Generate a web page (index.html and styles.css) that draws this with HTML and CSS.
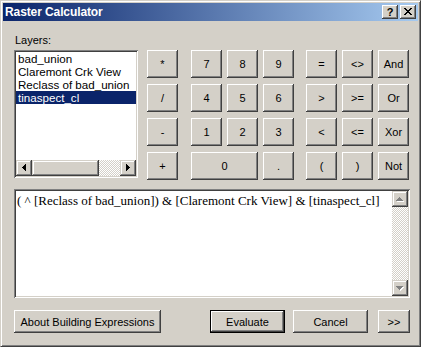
FILE: index.html
```html
<!DOCTYPE html>
<html lang="en">
<head>
    <meta charset="UTF-8" />
    <meta name="viewport" content="width=device-width, initial-scale=1.0" />
    <link rel="stylesheet" href="styles.css">
</head>
<body>
    <div class="window">
        <header class="titlebar">
            <span class="title">Raster Calculator</span>
            <div class="caption-buttons">
                <span class="cap-btn help">?</span>
                <span class="cap-btn">
                    <svg width="16" height="14" viewBox="0 0 16 14" shape-rendering="crispEdges">
                        <path d="M4 3h2v1h-2z M10 3h2v1h-2z M5 4h2v1h-2z M9 4h2v1h-2z M6 5h4v1h-4z M7 6h2v1h-2z M6 7h4v1h-4z M5 8h2v1h-2z M9 8h2v1h-2z M4 9h2v1h-2z M10 9h2v1h-2z" fill="#000"/>
                    </svg>
                </span>
            </div>
        </header>
        <main class="content">
            <section class="top">
                <div class="layers">
                    <label>Layers:</label>
                    <div class="listbox">
                        <ul class="items">
                            <li>bad_union</li>
                            <li>Claremont Crk View</li>
                            <li>Reclass of bad_union</li>
                            <li class="selected">tinaspect_cl</li>
                        </ul>
                        <div class="hscroll">
                            <span class="sb-btn">
                                <svg width="16" height="16" viewBox="0 0 16 16" shape-rendering="crispEdges">
                                    <path d="M6 7h1v1h-1z M7 6h1v3h-1z M8 5h1v5h-1z M9 4h1v7h-1z" fill="#000"/>
                                </svg>
                            </span>
                            <span class="sb-thumb"></span>
                            <span class="sb-track"></span>
                            <span class="sb-btn">
                                <svg width="16" height="16" viewBox="0 0 16 16" shape-rendering="crispEdges">
                                    <path d="M6 4h1v7h-1z M7 5h1v5h-1z M8 6h1v3h-1z M9 7h1v1h-1z" fill="#000"/>
                                </svg>
                            </span>
                        </div>
                    </div>
                </div>
                <div class="keypad">
                    <div class="ops">
                        <button class="btn">*</button>
                        <button class="btn">/</button>
                        <button class="btn">-</button>
                        <button class="btn">+</button>
                    </div>
                    <div class="digits">
                        <button class="btn">7</button>
                        <button class="btn">8</button>
                        <button class="btn">9</button>
                        <button class="btn">4</button>
                        <button class="btn">5</button>
                        <button class="btn">6</button>
                        <button class="btn">1</button>
                        <button class="btn">2</button>
                        <button class="btn">3</button>
                        <button class="btn zero">0</button>
                        <button class="btn">.</button>
                    </div>
                    <div class="logic">
                        <button class="btn">=</button>
                        <button class="btn">&lt;&gt;</button>
                        <button class="btn">And</button>
                        <button class="btn">&gt;</button>
                        <button class="btn">&gt;=</button>
                        <button class="btn">Or</button>
                        <button class="btn">&lt;</button>
                        <button class="btn">&lt;=</button>
                        <button class="btn">Xor</button>
                        <button class="btn">(</button>
                        <button class="btn">)</button>
                        <button class="btn">Not</button>
                    </div>
                </div>
            </section>
            <section class="expression">
                <div class="expr-text">( ^ [Reclass of bad_union]) &amp; [Claremont Crk View] &amp; [tinaspect_cl]</div>
                <div class="vscroll">
                    <span class="sb-btn">
                        <svg width="16" height="16" viewBox="0 0 16 16" shape-rendering="crispEdges">
                            <path d="M8 7h1v1h-1z M7 8h3v1h-3z M6 9h5v1h-5z M5 10h7v1h-7z" fill="#fff"/>
                            <path d="M7 6h1v1h-1z M6 7h3v1h-3z M5 8h5v1h-5z M4 9h7v1h-7z" fill="#808080"/>
                        </svg>
                    </span>
                    <span class="sb-track"></span>
                    <span class="sb-btn">
                        <svg width="16" height="16" viewBox="0 0 16 16" shape-rendering="crispEdges">
                            <path d="M5 7h7v1h-7z M6 8h5v1h-5z M7 9h3v1h-3z M8 10h1v1h-1z" fill="#fff"/>
                            <path d="M4 6h7v1h-7z M5 7h5v1h-5z M6 8h3v1h-3z M7 9h1v1h-1z" fill="#808080"/>
                        </svg>
                    </span>
                </div>
            </section>
            <footer class="footer">
                <button class="btn about">About Building Expressions</button>
                <button class="btn evaluate">Evaluate</button>
                <button class="btn cancel">Cancel</button>
                <button class="btn more">&gt;&gt;</button>
            </footer>
        </main>
    </div>
</body>
</html>
```

FILE: styles.css
```css
* {
    box-sizing: border-box;
}
html, body {
    margin: 0;
    padding: 0;
}
body {
    background-color: #d4d0c8;
    font-family: "Liberation Sans", Arial, sans-serif;
    font-size: 11px;
    color: #000;
}
.window {
    width: 421px;
    height: 347px;
    padding: 2px;
    background-color: #d4d0c8;
    border: 1px solid;
    border-color: #d4d0c8 #404040 #404040 #d4d0c8;
    box-shadow: inset 1px 1px #fff, inset -1px -1px #808080;
}
.titlebar {
    display: flex;
    align-items: center;
    height: 18px;
    padding: 0 2px 0 2px;
    background: linear-gradient(to right, #0a246a, #a6caf0);
}
.title {
    flex: 1;
    color: #fff;
    font-weight: bold;
    font-size: 12px;
    letter-spacing: -0.1px;
}
.caption-buttons {
    display: flex;
    gap: 2px;
}
.cap-btn {
    display: flex;
    align-items: center;
    justify-content: center;
    width: 16px;
    height: 14px;
    background-color: #d4d0c8;
    box-shadow: inset -1px -1px #404040, inset 1px 1px #fff, inset -2px -2px #808080, inset 2px 2px #d4d0c8;
}
.cap-btn.help {
    font-weight: bold;
    font-size: 11px;
    line-height: 14px;
}
.content {
    padding: 13px 8px 11px 11px;
}
.top {
    display: flex;
    align-items: flex-start;
    gap: 9px;
    height: 146px;
}
.layers label {
    display: block;
    height: 13px;
    line-height: 13px;
    margin-bottom: 3px;
    padding-left: 1px;
}
.listbox {
    display: flex;
    flex-direction: column;
    width: 124px;
    height: 128px;
    padding: 2px;
    background-color: #fff;
    box-shadow: inset 1px 1px #808080, inset -1px -1px #fff, inset 2px 2px #404040, inset -2px -2px #d4d0c8;
}
.items {
    flex: 1;
    list-style: none;
    margin: 0;
    padding: 0;
    font-size: 11.6px;
}
.items li {
    height: 13px;
    line-height: 13px;
    padding-left: 2px;
    white-space: nowrap;
}
.items li.selected {
    background-color: #0a246a;
    color: #fff;
}
.hscroll {
    display: flex;
    height: 16px;
}
.sb-btn {
    display: block;
    width: 16px;
    height: 16px;
    background-color: #d4d0c8;
    box-shadow: inset -1px -1px #404040, inset 1px 1px #d4d0c8, inset -2px -2px #808080, inset 2px 2px #fff;
}
.sb-btn svg {
    display: block;
}
.sb-thumb {
    width: 67px;
    height: 16px;
    background-color: #d4d0c8;
    box-shadow: inset -1px -1px #404040, inset 1px 1px #d4d0c8, inset -2px -2px #808080, inset 2px 2px #fff;
}
.sb-track {
    flex: 1;
    background-color: #d4d0c8;
    background-image: repeating-conic-gradient(#fff 0 25%, #d4d0c8 0 50%);
    background-size: 2px 2px;
}
.keypad {
    display: flex;
    margin-top: 16px;
}
.ops,
.digits,
.logic {
    display: grid;
    grid-auto-rows: 28px;
    gap: 6px 5px;
}
.ops {
    grid-template-columns: 31px;
    margin-right: 13px;
}
.digits {
    grid-template-columns: repeat(3, 31px);
    margin-right: 12px;
}
.logic {
    grid-template-columns: repeat(3, 31px);
}
.digits .zero {
    grid-column: span 2;
}
.btn {
    display: flex;
    align-items: center;
    justify-content: center;
    margin: 0;
    padding: 0;
    border: none;
    background-color: #d4d0c8;
    font-family: "Liberation Sans", Arial, sans-serif;
    font-size: 11px;
    color: #000;
    box-shadow: inset -1px -1px #404040, inset 1px 1px #fff, inset -2px -2px #808080, inset 2px 2px #d4d0c8;
}
.expression {
    display: flex;
    margin-top: 9px;
    height: 109px;
    padding: 2px;
    background-color: #fff;
    box-shadow: inset 1px 1px #808080, inset -1px -1px #fff, inset 2px 2px #404040, inset -2px -2px #d4d0c8;
}
.expr-text {
    flex: 1;
    padding: 2px 1px;
    font-family: "Liberation Serif", "Times New Roman", serif;
    font-size: 13px;
    line-height: 15px;
    white-space: nowrap;
}
.vscroll {
    display: flex;
    flex-direction: column;
    width: 16px;
}
.footer {
    display: flex;
    margin-top: 12px;
    height: 23px;
}
.about {
    width: 147px;
}
.evaluate {
    width: 75px;
    margin-left: auto;
    border: 1px solid #000;
}
.cancel {
    width: 75px;
    margin-left: 8px;
}
.more {
    width: 32px;
    margin-left: 10px;
}
```
